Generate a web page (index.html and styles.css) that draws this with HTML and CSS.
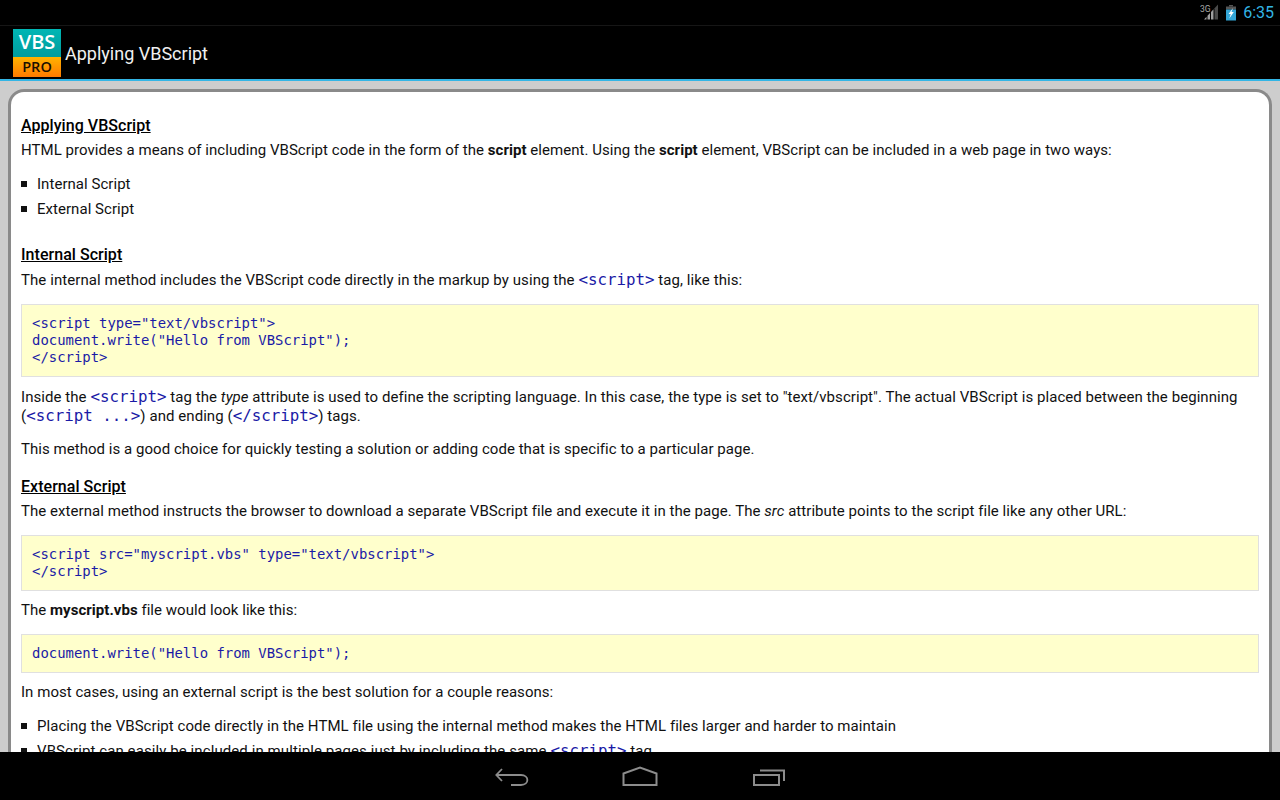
FILE: index.html
```html
<!DOCTYPE html>
<html lang="en">
<head>
<meta charset="utf-8">
<title>Applying VBScript</title>
<link rel="stylesheet" href="styles.css">
</head>
<body>
<div class="screen">
  <div class="statusbar">
    <svg class="ic-signal" width="19" height="18" viewBox="0 0 19 18">
      <text x="0" y="7.500" class="ic-3g">3G</text>
      <path d="M4 15.500 L6.500 12.800 V15.500 Z M7.500 15.500 V11.700 L10 9 V15.500 Z M11 15.500 V8 L13.500 5.300 V15.500 Z" fill="#a0a0a0"/>
      <path d="M14.500 15.500 V4.200 L18 .5 V15.500 Z" fill="#4a4a4a"/>
    </svg>
    <svg class="ic-batt" width="10" height="16" viewBox="0 0 10 16">
      <rect x="3" y="0" width="4" height="1.500" fill="#555"/>
      <rect x="0" y="1.500" width="10" height="3" fill="#555"/>
      <rect x="0" y="4.500" width="10" height="11" fill="#33a5d6"/>
      <path d="M7 3 L2.500 9 H4.700 L3.300 13.500 L7.800 7 H5.500 Z" fill="#fff"/>
    </svg>
    <span class="clock">6:35</span>
  </div>
  <header class="actionbar">
    <div class="logo">
      <div class="logo-top">VBS</div>
      <div class="logo-bottom">PRO</div>
    </div>
    <h1 class="title">Applying VBScript</h1>
  </header>
  <main class="main">
    <article class="card">
      <h2 class="h h-first">Applying VBScript</h2>
      <p class="p">HTML provides a means of including VBScript code in the form of the <b>script</b> element. Using the <b>script</b> element, VBScript can be included in a web page in two ways:</p>
      <ul class="list">
        <li>Internal Script</li>
        <li>External Script</li>
      </ul>
      <h2 class="h h-second">Internal Script</h2>
      <p class="p p-lead wide">The internal method includes the VBScript code directly in the markup by using the <code>&lt;script&gt;</code> tag, like this:</p>
      <pre class="code">&lt;script type="text/vbscript"&gt;
document.write("Hello from VBScript");
&lt;/script&gt;</pre>
      <p class="p p-after-tall mid">Inside the <code>&lt;script&gt;</code> tag the <i>type</i> attribute is used to define the scripting language. In this case, the type is set to "text/vbscript". The actual VBScript is placed between the beginning (<code>&lt;script ...&gt;</code>) and ending (<code>&lt;/script&gt;</code>) tags.</p>
      <p class="p p-para">This method is a good choice for quickly testing a solution or adding code that is specific to a particular page.</p>
      <h2 class="h h-third">External Script</h2>
      <p class="p mid-low">The external method instructs the browser to download a separate VBScript file and execute it in the page. The <i>src</i> attribute points to the script file like any other URL:</p>
      <pre class="code">&lt;script src="myscript.vbs" type="text/vbscript"&gt;
&lt;/script&gt;</pre>
      <p class="p p-after">The <b>myscript.vbs</b> file would look like this:</p>
      <pre class="code">document.write("Hello from VBScript");</pre>
      <p class="p p-after">In most cases, using an external script is the best solution for a couple reasons:</p>
      <ul class="list">
        <li class="mid-low">Placing the VBScript code directly in the HTML file using the internal method makes the HTML files larger and harder to maintain</li>
        <li class="wider">VBScript can easily be included in multiple pages just by including the same <code>&lt;script&gt;</code> tag</li>
      </ul>
    </article>
  </main>
  <nav class="navbar">
    <svg class="nav-ic" width="34" height="20" viewBox="0 0 34 20" fill="none" stroke="#8c8c8c" stroke-width="1.800">
      <path d="M7 3 L1.300 9 L7 15"/>
      <path d="M1.300 9 H26 C34.500 9 34.500 19 26 19 H16"/>
    </svg>
    <svg class="nav-ic" width="36" height="20" viewBox="0 0 36 20" fill="none" stroke="#8c8c8c" stroke-width="2">
      <path d="M1.500 7.500 L18 1.500 L34.500 7.500 V19 H1.500 Z"/>
    </svg>
    <svg class="nav-ic" width="34" height="20" viewBox="0 0 34 20" fill="none" stroke="#8c8c8c" stroke-width="2">
      <rect x="3" y="9" width="25" height="10"/>
      <path d="M9 4.500 H33 V15"/>
    </svg>
  </nav>
</div>
</body>
</html>
```
FILE: styles.css
```css
* { box-sizing: border-box; }
html, body { margin: 0; padding: 0; }
body { width: 1280px; height: 800px; overflow: hidden; background: #000; font-family: Roboto, "Liberation Sans", sans-serif; }
.screen { display: flex; flex-direction: column; width: 1280px; height: 800px; }

.statusbar { flex: 0 0 26px; height: 26px; background: #000; border-bottom: 1px solid #161616; display: flex; align-items: center; justify-content: flex-end; padding-right: 6px; gap: 6px; }
.ic-signal { margin-right: 1px; }
.ic-3g { font: 8.500px Roboto, sans-serif; fill: #a8a8a8; }
.clock { color: #33b5e5; font-size: 16px; margin-left: 1px; }

.actionbar { flex: 0 0 55px; height: 55px; background: #000; border-bottom: 2px solid #33b5e5; display: flex; align-items: flex-start; padding: 3px 0 0 13px; }
.logo { width: 48px; height: 48px; display: flex; flex-direction: column; text-align: center; }
.logo-top { height: 28px; background: linear-gradient(#00b6b4, #009c9e); color: #fff; font: 600 20px/26px "Open Sans", Roboto, sans-serif; }
.logo-bottom { height: 20px; background: linear-gradient(#ffb300, #ff7a00); color: #1a1000; font: 600 14.500px/19px "Open Sans", Roboto, sans-serif; }
.title { margin: 14px 0 0 4px; font: 400 18px/22px Roboto, sans-serif; color: #f0f0f0; }

.main { flex: 1 1 auto; min-height: 0; overflow: hidden; background: #cdcdcd; padding: 8px 8px 0; }
.card { background: #fff; border: 3px solid #8a8a8a; border-bottom: 0; border-radius: 16px 16px 0 0; padding: 15px 10px 0; color: #111; font-size: 15px; line-height: 19px; letter-spacing: .04px; }

.h { margin: 0; font-size: 16px; line-height: 20px; font-weight: 500; color: #000; text-decoration: underline; }
.h-first { margin-top: 9px; }
.h-second { margin-top: 26px; }
.h-third { margin-top: 18px; }
.p { margin: 5px 0 0; }
.p-lead { margin-top: 6px; }
.p-para { margin-top: 14px; }
.p-after { margin-top: 10px; }
.p-after-tall { margin-top: 11px; }
.wider { letter-spacing: .09px; }
.wide { letter-spacing: .075px; }
.mid { letter-spacing: .06px; }
.mid-low { letter-spacing: .05px; }
code { font-family: "DejaVu Sans Mono", monospace; font-size: 15.800px; line-height: 1; letter-spacing: 0; color: #1a1aa6; }
.list { list-style: none; margin: 15px 0 0; padding: 0 0 0 16px; }
.list li { margin-bottom: 6px; }
.list li::before { content: ""; display: inline-block; width: 6px; height: 6px; margin: 0 10px 2px -16px; vertical-align: middle; background: #111; }
.code { margin: 14px 0 0; padding: 10px; background: #ffffcc; border: 1px solid #e0e0e0; font: 13.930px/17px "DejaVu Sans Mono", monospace; letter-spacing: 0; color: #1a1aa6; }

.navbar { flex: 0 0 48px; height: 48px; background: #000; display: flex; align-items: center; justify-content: center; gap: 93px; }
```
